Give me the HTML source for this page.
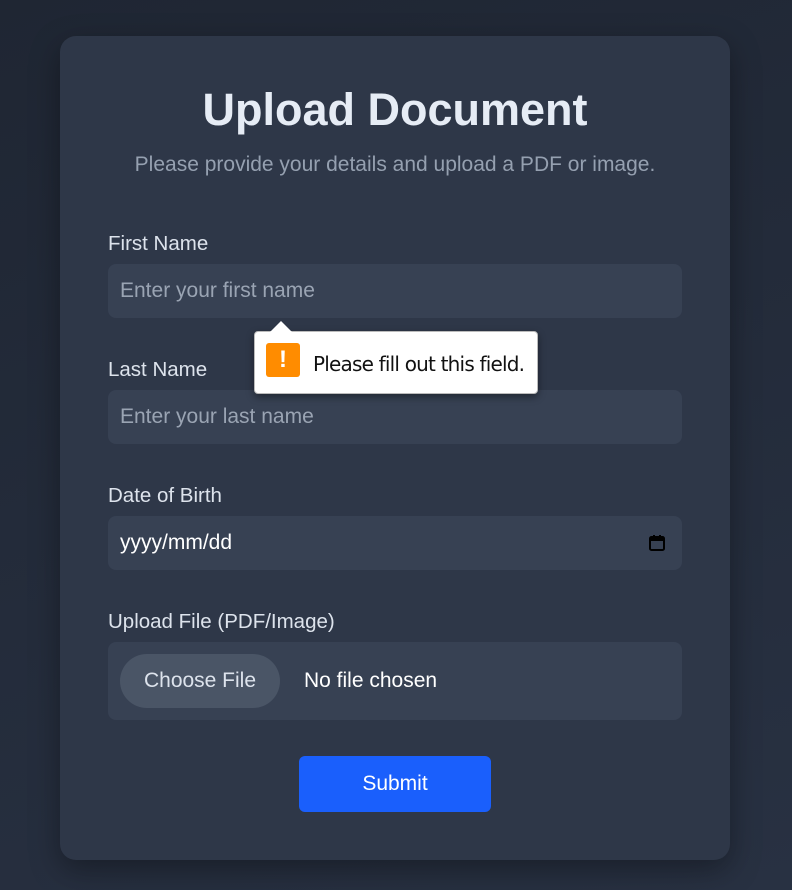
<!DOCTYPE html>
<html><head><style>
*{box-sizing:border-box;margin:0;padding:0}
body{width:792px;height:890px;background:linear-gradient(160deg,#1f2633,#283142);font-family:"Liberation Sans",Arial,sans-serif;position:relative;overflow:hidden}
.card{position:absolute;left:60px;top:36px;width:670px;height:824px;background:#2e3748;border-radius:16px;box-shadow:0 10px 30px rgba(0,0,0,.35)}
.a{position:absolute}
h1{position:absolute;left:0;width:790px;top:84px;text-align:center;font-size:45px;font-weight:bold;color:#e6ecf5}
.sub{left:0;width:790px;top:153px;text-align:center;font-size:21px;color:#95a0b0}
.lbl{left:108px;font-size:20.5px;color:#dde3ec}
.inp{left:108px;width:574px;height:54px;background:#374153;border-radius:8px;font-size:21px;color:#9aa4b3;padding:15px 12px}
</style></head><body>
<div class="card"></div>
<h1>Upload Document</h1>
<div class="a sub">Please provide your details and upload a PDF or image.</div>
<div class="a lbl" style="top:232px">First Name</div>
<div class="a inp" style="top:264px">Enter your first name</div>
<div class="a lbl" style="top:358px">Last Name</div>
<div class="a inp" style="top:390px">Enter your last name</div>
<div class="a lbl" style="top:484px">Date of Birth</div>
<div class="a inp" style="top:516px;color:#fff">yyyy/mm/dd</div>
<svg class="a" style="left:648px;top:534px" width="18" height="18" viewBox="0 0 18 18"><rect x="2" y="3" width="14" height="13" rx="1.5" fill="none" stroke="#000" stroke-width="2"/><rect x="2" y="3" width="14" height="4" fill="#000"/><rect x="5" y="1" width="2" height="3" fill="#000"/><rect x="11" y="1" width="2" height="3" fill="#000"/></svg>
<div class="a lbl" style="top:610px">Upload File (PDF/Image)</div>
<div class="a inp" style="top:642px;height:78px"></div>
<div class="a" style="left:120px;top:654px;width:160px;height:54px;border-radius:27px;background:#4a5566;color:#dde3ec;font-size:21px;text-align:center;line-height:54px">Choose File</div>
<div class="a" style="left:304px;top:669px;font-size:21px;color:#fff">No file chosen</div>
<div class="a" style="left:299px;top:756px;width:192px;height:56px;border-radius:6px;background:#1a5ffc;color:#fff;font-size:21px;text-align:center;line-height:56px">Submit</div>
<div class="a" style="left:254px;top:331px;width:284px;height:63px;background:#fff;border:1px solid #bbb;border-radius:4px;box-shadow:0 3px 8px rgba(0,0,0,.4)"></div>
<div class="a" style="left:270px;top:321px;width:0;height:0;border-left:11px solid transparent;border-right:11px solid transparent;border-bottom:11px solid #fff"></div>
<div class="a" style="left:266px;top:343px;width:34px;height:34px;background:#ff8c00;border-radius:3px;color:#fff;font-weight:bold;font-size:24px;text-align:center;line-height:34px">!</div>
<div class="a" style="left:313px;top:352px;font-size:20px;color:#111;font-family:'DejaVu Sans','Liberation Sans',sans-serif;letter-spacing:-0.8px">Please fill out this field.</div>
</body></html>
